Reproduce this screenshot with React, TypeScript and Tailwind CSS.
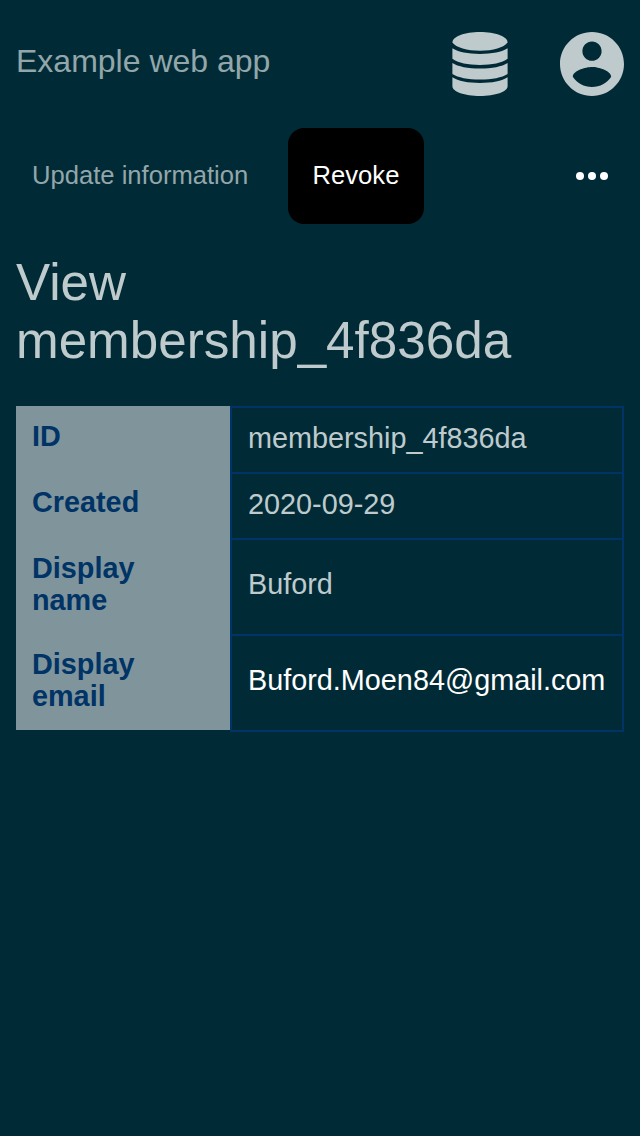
const rows = [
  { label: "ID", value: "membership_4f836da", height: "h-[66px]", pad: "pb-1" },
  { label: "Created", value: "2020-09-29", height: "h-[66px]", pad: "pb-1" },
  { label: "Display name", value: "Buford", height: "h-24", pad: "pb-1.5" },
  { label: "Display email", value: "Buford.Moen84@gmail.com", height: "h-24", pad: "pb-1.5", strong: true },
];

function DatabaseIcon() {
  return (
    <svg width="56" height="64" viewBox="0 0 56 64" fill="currentColor">
      <path d="M.4 10.500C.4 4.500 12.800 0 28 0s27.600 4.500 27.600 10.500C52 15.600 41 18.700 28 18.700S4 15.600.4 10.500z" />
      <path d="M.4 16.300C6 20 16 21.900 28 21.900S50 20 55.600 16.300v10.500C50 31 40 33 28 33S6 31 .4 26.800z" />
      <path d="M.4 31C6 34.700 16 36.500 28 36.500s22-1.800 27.600-5.500v11C50 45.700 40 47.500 28 47.500S6 45.700.4 42z" />
      <path d="M.4 45.300C6 49 16 51 28 51s22-2 27.600-5.700v9C55.600 59.700 43.200 64 28 64S.4 59.700.4 54.300z" />
    </svg>
  );
}

function AccountIcon() {
  return (
    <svg width="64" height="64" viewBox="2 2 20 20" fill="currentColor">
      <path d="M12 2C6.480 2 2 6.480 2 12s4.480 10 10 10 10-4.480 10-10S17.520 2 12 2zm0 3c1.660 0 3 1.340 3 3s-1.340 3-3 3-3-1.340-3-3 1.340-3 3-3zm0 14.200c-2.500 0-4.710-1.280-6-3.220.03-1.990 4-3.080 6-3.080 1.990 0 5.970 1.090 6 3.080-1.290 1.940-3.500 3.220-6 3.220z" />
    </svg>
  );
}

export default function App() {
  return (
    <div className="min-h-[1136px] w-[640px] bg-[#002b36] font-['Liberation_Sans',Arial,sans-serif] text-[#bfcacd]">
      <header className="flex h-32 items-center justify-between px-4">
        <div className="-mt-1.5 text-[32px] leading-9 text-[#93a6aa]">Example web app</div>
        <div className="flex items-center gap-[52px]">
          <DatabaseIcon />
          <AccountIcon />
        </div>
      </header>
      <nav className="flex h-24 items-center text-[25.600px]">
        <button className="w-[280px] pb-0.5 pl-8 text-left text-[#93a6aa]">Update information</button>
        <button className="ml-2 h-24 w-[136px] rounded-2xl bg-black pb-0.5 text-white">Revoke</button>
        <button aria-label="More" className="mr-8 ml-auto flex gap-1">
          <span className="size-2 rounded-full bg-white" />
          <span className="size-2 rounded-full bg-white" />
          <span className="size-2 rounded-full bg-white" />
        </button>
      </nav>
      <main className="px-4 pt-[30px]">
        <h1 className="text-[51.200px] leading-[58px]">View<br />membership_4f836da</h1>
        <dl className="mt-9 text-[28.800px] leading-8">
          {rows.map((row) => (
            <div key={row.label} className={`flex ${row.height}`}>
              <dt className="w-[214px] bg-[#80959b] py-3.5 pr-16 pl-4 font-bold text-[#003366]">{row.label}</dt>
              <dd className={`-mb-0.5 flex flex-1 items-center border-2 border-[#003366] pl-4 whitespace-nowrap ${row.pad} ${row.strong ? "text-white" : ""}`}>{row.value}</dd>
            </div>
          ))}
        </dl>
      </main>
    </div>
  );
}
